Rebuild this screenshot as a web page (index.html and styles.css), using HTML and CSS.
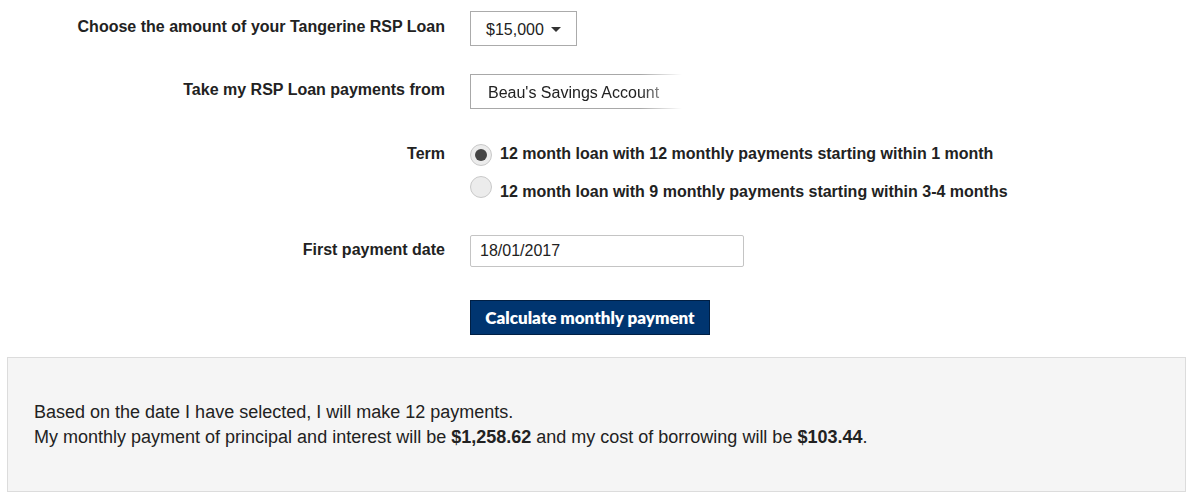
FILE: index.html
```html
<!DOCTYPE html>
<html>
<head>
<meta charset="utf-8">
<link rel="stylesheet" href="styles.css">
</head>
<body>
<div class="page">
  <form class="form">
    <div class="row row-amount">
      <div class="label">Choose the amount of your Tangerine RSP Loan</div>
      <div class="control">
        <div class="select">$15,000 <span class="caret"></span></div>
      </div>
    </div>
    <div class="row row-account">
      <div class="label">Take my RSP Loan payments from</div>
      <div class="control">
        <div class="account">Beau's Savings Account</div>
      </div>
    </div>
    <div class="row row-term">
      <div class="label">Term</div>
      <div class="control radios">
        <label class="radio checked"><span class="dot"></span><span class="rtext">12 month loan with 12 monthly payments starting within 1 month</span></label>
        <label class="radio second"><span class="dot"></span><span class="rtext">12 month loan with 9 monthly payments starting within 3-4 months</span></label>
      </div>
    </div>
    <div class="row row-date">
      <div class="label">First payment date</div>
      <div class="control">
        <div class="date">18/01/2017</div>
      </div>
    </div>
    <div class="row row-button">
      <div class="label"></div>
      <div class="control">
        <button type="button" class="btn">Calculate monthly payment</button>
      </div>
    </div>
  </form>
  <div class="result">
    <p>Based on the date I have selected, I will make 12 payments.<br>My monthly payment of principal and interest will be <b>$1,258.62</b> and my cost of borrowing will be <b>$103.44</b>.</p>
  </div>
</div>
</body>
</html>
```
FILE: styles.css
```css
html, body {
  margin: 0;
  padding: 0;
  background: #fff;
}
body {
  font-family: "Liberation Sans", Arial, sans-serif;
  color: #222;
}
.page {
  width: 1195px;
  height: 499px;
  overflow: hidden;
}
.form {
  display: flex;
  flex-direction: column;
}
.row {
  display: grid;
  grid-template-columns: 445px 1fr;
  column-gap: 25px;
}
.label {
  text-align: right;
  font-weight: bold;
  font-size: 16px;
  color: #222;
}
.row-amount {
  margin-top: 11px;
  height: 35px;
}
.row-amount .label { padding-top: 7px; }
.select {
  box-sizing: border-box;
  width: 107px;
  height: 35px;
  border: 1px solid #ababab;
  padding: 9px 0 0 15px;
  font-size: 16px;
  color: #222;
  display: flex;
  align-items: flex-start;
}
.caret {
  display: inline-block;
  width: 0;
  height: 0;
  border-left: 5px solid transparent;
  border-right: 5px solid transparent;
  border-top: 5px solid #333;
  margin: 6px 0 0 7px;
}
.row-account {
  margin-top: 28px;
  height: 35px;
}
.row-account .label { padding-top: 7px; }
.account {
  box-sizing: border-box;
  width: 215px;
  height: 35px;
  border: 1px solid #a8a8a8;
  border-right: none;
  padding: 9px 0 0 17px;
  font-size: 16px;
  color: #222;
  -webkit-mask-image: linear-gradient(to right, #000 170px, transparent 212px);
  mask-image: linear-gradient(to right, #000 170px, transparent 212px);
  box-shadow: 0 1px 0 #999;
}
.row-term {
  margin-top: 35px;
}
.row-term .label { padding-top: 1px; }
.radios {
  display: flex;
  flex-direction: column;
}
.radio {
  display: flex;
  align-items: flex-start;
  font-size: 16px;
  font-weight: bold;
  color: #222;
}
.dot {
  box-sizing: border-box;
  width: 22px;
  height: 22px;
  border-radius: 50%;
  border: 1px solid #c9c9c9;
  background: #ececec;
  margin-right: 8px;
  position: relative;
  flex: none;
}
.radio.checked .dot::after {
  content: "";
  position: absolute;
  left: 4px;
  top: 4px;
  width: 12px;
  height: 12px;
  border-radius: 50%;
  background: #444;
}
.radio.checked .rtext { padding-top: 1px; }
.radio.second { margin-top: 10px; }
.radio.second .rtext { padding-top: 7px; }
.row-date {
  margin-top: 34px;
}
.row-date .label { padding-top: 6px; }
.date {
  box-sizing: border-box;
  width: 274px;
  height: 32px;
  border: 1px solid #c4c4c4;
  border-radius: 2px;
  padding: 6px 0 0 9px;
  font-size: 16px;
  color: #222;
}
.row-button {
  margin-top: 33px;
}
.btn {
  box-sizing: border-box;
  width: 240px;
  height: 35px;
  background: #003570;
  border: 1px solid #001f44;
  color: #fff;
  font-family: "Lato", "Open Sans", sans-serif;
  font-weight: 800;
  font-size: 17px;
  padding: 0;
  text-align: center;
}
.result {
  box-sizing: border-box;
  margin: 22px 0 0 7px;
  width: 1179px;
  height: 135px;
  background: #f5f5f5;
  border: 1px solid #dcdcdc;
  padding: 42px 0 0 26px;
}
.result p {
  margin: 0;
  font-size: 18px;
  line-height: 25px;
  color: #222;
}
.result b { font-weight: bold; }
```
